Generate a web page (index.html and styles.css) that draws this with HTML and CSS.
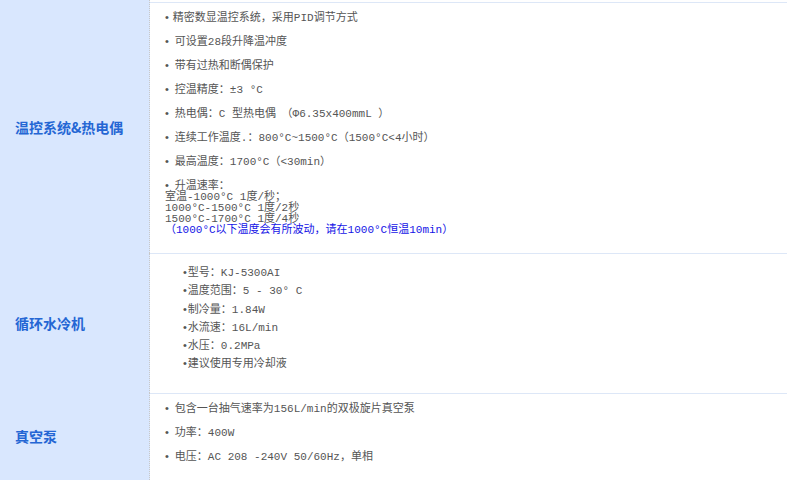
FILE: index.html
```html
<!DOCTYPE html>
<html lang="zh">
<head>
    <meta charset="UTF-8">
    <meta name="viewport" content="width=device-width, initial-scale=1.0">
    <title>配置参数</title>
    <link rel="stylesheet" href="styles.css">
</head>
<body>
    <div class="specs">
        <!-- 温控系统 -->
        <div class="row first">
            <div class="label">温控系统&amp;热电偶</div>
            <div class="detail">
                <p><span class="dot mid">•</span>精密数显温控系统，采用PID调节方式</p>
                <p><span class="dot wide">•</span>可设置28段升降温冲度</p>
                <p><span class="dot wide">•</span>带有过热和断偶保护</p>
                <p><span class="dot wide">•</span>控温精度：±3 °C</p>
                <p><span class="dot wide">•</span>热电偶：C 型热电偶　（Φ6.35x400mmL ）</p>
                <p><span class="dot wide">•</span>连续工作温度.：800°C~1500°C（1500°C&lt;4小时）</p>
                <p><span class="dot wide">•</span>最高温度：1700°C（&lt;30min）</p>
                <p><span class="dot wide">•</span>升温速率：<br>室温-1000°C 1度/秒；<br>1000°C-1500°C 1度/2秒<br>1500°C-1700°C 1度/4秒<br><span class="notice">（1000°C以下温度会有所波动，请在1000°C恒温10min）</span></p>
            </div>
        </div>

        <!-- 循环水冷机 -->
        <div class="row">
            <div class="label">循环水冷机</div>
            <div class="detail compact">
                <p><span class="dot">•</span>型号：KJ-5300AI</p>
                <p><span class="dot">•</span>温度范围：5 - 30° C</p>
                <p><span class="dot">•</span>制冷量：1.84W</p>
                <p><span class="dot">•</span>水流速：16L/min</p>
                <p><span class="dot">•</span>水压：0.2MPa</p>
                <p><span class="dot">•</span>建议使用专用冷却液</p>
            </div>
        </div>

        <!-- 真空泵 -->
        <div class="row">
            <div class="label">真空泵</div>
            <div class="detail">
                <p><span class="dot wide">•</span>包含一台抽气速率为156L/min的双极旋片真空泵</p>
                <p><span class="dot wide">•</span>功率：400W</p>
                <p><span class="dot wide">•</span>电压：AC 208 -240V 50/60Hz，单相</p>
            </div>
        </div>
    </div>
</body>
</html>
```

FILE: styles.css
```css
body, html {
    margin: 0;
    padding: 0;
    background-color: #fff;
    font-family: "Liberation Mono", "Noto Sans CJK SC", monospace;
    font-size: 11px;
    color: #555;
}
.specs {
    width: 787px;
}
.row {
    display: flex;
}
.label {
    width: 150px;
    flex-shrink: 0;
    box-sizing: border-box;
    padding-left: 15px;
    display: flex;
    align-items: center;
    background-color: #d9e7fe;
    border-right: 1px dotted #c8c8c8;
    font-family: "Noto Sans CJK SC", sans-serif;
    font-size: 14px;
    font-weight: bold;
    color: #2466d4;
}
.detail {
    flex: 1;
    border-top: 1px solid #dde7f7;
    padding: 9px 15px 5px;
}
.row.first .detail {
    margin-top: 2px;
}
.detail p {
    margin: 0 0 12px;
    line-height: 11px;
}
/* 水冷机那一栏是紧凑的列表，整体右移 */
.detail.compact {
    padding: 10px 15px 19px 33px;
}
.detail.compact p {
    margin: 0;
    line-height: 17.3px;
}
.dot {
    font-family: "Liberation Sans", sans-serif;
    margin-right: 1px;
}
.dot.mid {
    margin-right: 4px;
}
.dot.wide {
    margin-right: 6px;
}
.notice {
    color: #1414e6;
}
```
